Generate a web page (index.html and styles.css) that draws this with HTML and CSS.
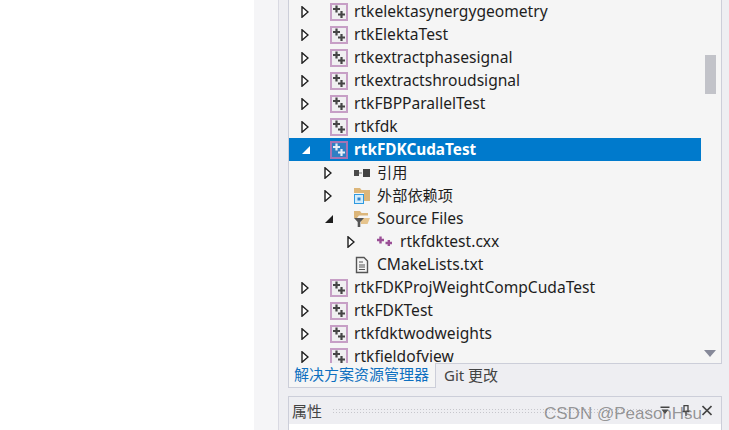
FILE: index.html
```html
<!DOCTYPE html>
<html lang="zh">
<head>
<meta charset="utf-8">
<title>解决方案资源管理器</title>
<link rel="stylesheet" href="styles.css">
</head>
<body>
<svg class="defs" width="0" height="0" aria-hidden="true">
  <defs>
    <symbol id="closed" viewBox="0 0 8 12"><path d="M1 .8 7 6 1 11.2Z" fill="#fff" stroke="#1e1e1e" stroke-width="1.4"/></symbol>
    <symbol id="open" viewBox="0 0 10 10"><path d="M9 1V9H1Z" fill="#1e1e1e"/></symbol>
    <symbol id="openw" viewBox="0 0 10 10"><path d="M9 1V9H1Z" fill="#fff"/></symbol>
    <symbol id="proj" viewBox="0 0 18 18">
      <rect x="1" y="1" width="16" height="16" fill="#f0eff1" stroke="#c79fc6" stroke-width="2"/>
      <path d="M3 6H10M6.500 2.500V9.500M8 11.500H15M11.500 8V15" stroke="#454545" stroke-width="2.200"/>
    </symbol>
    <symbol id="projw" viewBox="0 0 18 18">
      <rect x="1" y="1" width="16" height="16" fill="#2f7fc4" stroke="#a673b4" stroke-width="2"/>
      <path d="M3 6H10M6.500 2.500V9.500M8 11.500H15M11.500 8V15" stroke="#e8eef6" stroke-width="2.200"/>
    </symbol>
  </defs>
</svg>
<div class="app">
  <div class="blank"></div>
  <div class="band"></div>
  <div class="dock">
    <section class="explorer">
      <ul class="tree">
        <li class="row"><svg class="arrow"><use href="#closed"/></svg><svg class="icon"><use href="#proj"/></svg><span>rtkelektasynergygeometry</span></li>
        <li class="row"><svg class="arrow"><use href="#closed"/></svg><svg class="icon"><use href="#proj"/></svg><span>rtkElektaTest</span></li>
        <li class="row"><svg class="arrow"><use href="#closed"/></svg><svg class="icon"><use href="#proj"/></svg><span>rtkextractphasesignal</span></li>
        <li class="row"><svg class="arrow"><use href="#closed"/></svg><svg class="icon"><use href="#proj"/></svg><span>rtkextractshroudsignal</span></li>
        <li class="row"><svg class="arrow"><use href="#closed"/></svg><svg class="icon"><use href="#proj"/></svg><span>rtkFBPParallelTest</span></li>
        <li class="row"><svg class="arrow"><use href="#closed"/></svg><svg class="icon"><use href="#proj"/></svg><span>rtkfdk</span></li>
        <li class="row selected"><svg class="arrow small"><use href="#openw"/></svg><svg class="icon"><use href="#projw"/></svg><span>rtkFDKCudaTest</span></li>
        <li class="row level1"><svg class="arrow"><use href="#closed"/></svg>
          <svg class="icon" viewBox="0 0 18 18"><rect x="1" y="6" width="5" height="6" fill="#4a4a4a"/><rect x="6" y="8.500" width="3" height="1" fill="#777"/><rect x="10" y="5" width="7" height="8" fill="#424242"/></svg>
          <span class="cjk">引用</span></li>
        <li class="row level1"><svg class="arrow"><use href="#closed"/></svg>
          <svg class="icon" viewBox="0 0 18 18"><path d="M1 1H7L8.500 3H17V14H1Z" fill="#dcb67a"/><rect x="0" y="6" width="11" height="12" fill="#f5f5f5"/><rect x="1.500" y="7.500" width="9" height="9" fill="#d3ecfb" stroke="#2f9ae0"/><rect x="4.500" y="10.500" width="3" height="3" fill="#2f86d0"/></svg>
          <span class="cjk">外部依赖项</span></li>
        <li class="row level1"><svg class="arrow small"><use href="#open"/></svg>
          <svg class="icon" viewBox="0 0 18 18"><path d="M1 1H7L8.500 3H15V5.500H6L4 8H1Z" fill="#dcb67a"/><path d="M8 8H17L14.500 14H8Z" fill="#e6c48d"/><path d="M1 8H11L7.300 12V17H4.700V12Z" fill="#555"/></svg>
          <span>Source Files</span></li>
        <li class="row level2"><svg class="arrow"><use href="#closed"/></svg>
          <svg class="icon" viewBox="0 0 18 18"><path d="M1 7H8M4.500 3.500V10.500M9.500 10H16M12.800 7V13" stroke="#9b4f96" stroke-width="2.400" fill="none"/></svg>
          <span>rtkfdktest.cxx</span></li>
        <li class="row level1 leaf"><span class="arrow-gap"></span>
          <svg class="icon" viewBox="0 0 18 18"><path d="M3.500 1.500H11L14.500 5V16.500H3.500Z" fill="#f5f5f5" stroke="#555" stroke-width="1.400"/><path d="M6 6H10M6 9H12M6 11H12M6 13.500H12" stroke="#555"/></svg>
          <span>CMakeLists.txt</span></li>
        <li class="row"><svg class="arrow"><use href="#closed"/></svg><svg class="icon"><use href="#proj"/></svg><span>rtkFDKProjWeightCompCudaTest</span></li>
        <li class="row"><svg class="arrow"><use href="#closed"/></svg><svg class="icon"><use href="#proj"/></svg><span>rtkFDKTest</span></li>
        <li class="row"><svg class="arrow"><use href="#closed"/></svg><svg class="icon"><use href="#proj"/></svg><span>rtkfdktwodweights</span></li>
        <li class="row"><svg class="arrow"><use href="#closed"/></svg><svg class="icon"><use href="#proj"/></svg><span>rtkfieldofview</span></li>
      </ul>
      <div class="scrollbar">
        <div class="thumb"></div>
        <svg class="scroll-down" viewBox="0 0 12 7"><path d="M0 0H12L6 7Z" fill="#868999"/></svg>
      </div>
    </section>
    <nav class="tabs">
      <div class="tab active">解决方案资源管理器</div>
      <div class="tab">Git 更改</div>
    </nav>
    <section class="props">
      <header class="props-title">
        <span class="props-name">属性</span>
        <span class="grip"></span>
        <span class="tools">
          <svg class="tool" viewBox="0 0 10 10"><path d="M.5 1H9.500V2.500H.5ZM1.500 4H8.500L5 8.500Z" fill="#444"/></svg>
          <svg class="tool" viewBox="0 0 10 11"><path d="M3 .5H7V6.500H3ZM1.500 6.500H8.500M5 7V11" fill="none" stroke="#444" stroke-width="1.300"/></svg>
          <svg class="tool" viewBox="0 0 10 10"><path d="M.5 .5 9.500 9.500M9.500 .5 .5 9.500" stroke="#444" stroke-width="1.600"/></svg>
        </span>
      </header>
      <div class="props-body"></div>
    </section>
  </div>
</div>
<div class="watermark">CSDN @PeasonHsu</div>
</body>
</html>
```
FILE: styles.css
```css
* { box-sizing: border-box; }
html, body { margin: 0; padding: 0; }
body {
  position: relative;
  width: 729px;
  height: 430px;
  overflow: hidden;
  background: #fff;
  font-family: "Noto Sans", "Noto Sans CJK SC", sans-serif;
  color: #1e1e1e;
}
.defs { position: absolute; }
.app { display: flex; height: 430px; }
.blank { width: 254px; background: #fff; flex: none; }
.band { width: 24px; background: #f5f5f7; flex: none; }
.dock {
  flex: 1;
  background: #eeeef2;
  border-left: 1px solid #d9d9e2;
  padding-left: 9px;
  padding-right: 7px;
  display: flex;
  flex-direction: column;
  min-width: 0;
}
.explorer {
  height: 364px;
  flex: none;
  display: flex;
  background: #f5f5f5;
  border-right: 1px solid #ccced9;
  border-bottom: 1px solid #ccced9;
  border-left: 1px solid #ccced9;
  overflow: hidden;
}
.tree {
  list-style: none;
  margin: 0;
  padding: 0;
  flex: 1;
  min-width: 0;
  font-size: 15.6px;
}
.row {
  display: flex;
  align-items: center;
  height: 23px;
  padding-left: 12px;
  white-space: nowrap;
  color: #1e1e1e;
}
.row span { line-height: 23px; }
.row .cjk { font-size: 15.200px; }
.arrow { width: 8px; height: 12px; flex: none; margin-right: 21px; }
.arrow.small { width: 10px; height: 10px; margin-right: 19px; }
.arrow-gap { width: 29px; flex: none; }
.icon { width: 18px; height: 18px; flex: none; margin-right: 6px; }
.level1 { padding-left: 35px; }
.level2 { padding-left: 58px; }
.selected {
  background: #007acc;
  color: #fff;
  font-weight: 700;
  font-size: 15.300px;
  width: 412px;
}
.scrollbar {
  width: 20px;
  flex: none;
  display: flex;
  flex-direction: column;
  align-items: flex-end;
  padding-right: 5px;
  padding-top: 55px;
}
.thumb { width: 11px; height: 39px; background: #c2c3c9; }
.scroll-down { width: 12px; height: 7px; margin-top: auto; margin-bottom: 6px; }
.tabs {
  height: 24px;
  flex: none;
  display: flex;
  font-size: 15px;
}
.tab { padding: 0 5px; line-height: 23px; color: #444; }
.active {
  width: 148px;
  padding: 0 5px;
  background: #f5f5f5;
  color: #0e70c0;
  border-left: 1px solid #ccced9;
  border-right: 1px solid #ccced9;
  border-bottom: 1px solid #ccced9;
  margin-top: -1px;
  height: 25px;
  white-space: nowrap;
}
.tabs .tab:last-child { padding-left: 8px; }
.props {
  margin-top: 8px;
  flex: 1;
  display: flex;
  flex-direction: column;
  border: 1px solid #ccced9;
  border-bottom: 0;
}
.props-title {
  height: 27px;
  flex: none;
  display: flex;
  align-items: center;
  padding-left: 3px;
  padding-right: 9px;
  font-size: 15px;
  color: #444;
}
.props-name { flex: none; }
.grip {
  flex: 1;
  height: 6px;
  margin: 0 8px 0 10px;
  background-image: radial-gradient(#c6c6cc 0.7px, transparent 0.8px);
  background-size: 3px 3px;
}
.tools { display: flex; gap: 11px; align-items: center; flex: none; }
.tool { width: 10px; height: 11px; }
.props-body { flex: 1; background: #fff; }
.watermark {
  position: absolute;
  left: 544px;
  top: 404px;
  font: 17px "Liberation Sans", sans-serif;
  color: rgba(90, 90, 90, .62);
  white-space: nowrap;
}
```
